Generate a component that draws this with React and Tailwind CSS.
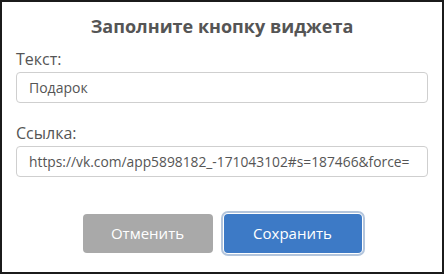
import { useState } from "react";

function Field({ label, value, onChange, size = "text-[14px]" }) {
  return (
    <div className="flex flex-col gap-[2px]">
      <label className="text-[16px] leading-[22px] text-[#555]">{label}</label>
      <input
        type="text"
        value={value}
        onChange={(e) => onChange(e.target.value)}
        className={`h-[31px] w-full rounded-[4px] border border-[#cfcfcf] bg-white px-[12px] text-[#555] outline-none ${size}`}
      />
    </div>
  );
}

export default function App() {
  const [text, setText] = useState("Подарок");
  const [link, setLink] = useState(
    "https://vk.com/app5898182_-171043102#s=187466&force="
  );

  return (
    <div
      className="w-[444px] h-[274px] border-2 border-[#1b1b1b] bg-white px-[14px] flex flex-col"
      style={{ fontFamily: '"Open Sans", sans-serif' }}
    >
      <h2 className="mt-[12px] text-center text-[18px] leading-[24px] font-bold text-[#555]">
        Заполните кнопку виджета
      </h2>

      <div className="mt-[10px] flex flex-col gap-[19px]">
        <Field label="Текст:" value={text} onChange={setText} />
        <Field
          label="Ссылка:"
          value={link}
          onChange={setLink}
          size="text-[13.8px]"
        />
      </div>

      <div className="mt-[37px] flex justify-center gap-[11px]">
        <button className="h-[39px] w-[130px] rounded-[4px] bg-[#a9a9a9] text-[15px] text-white">
          Отменить
        </button>
        <button className="h-[39px] w-[138px] rounded-[4px] bg-[#3d7ac6] text-[15px] text-white ring-2 ring-[#b3c5dc] ring-offset-1">
          Сохранить
        </button>
      </div>
    </div>
  );
}
